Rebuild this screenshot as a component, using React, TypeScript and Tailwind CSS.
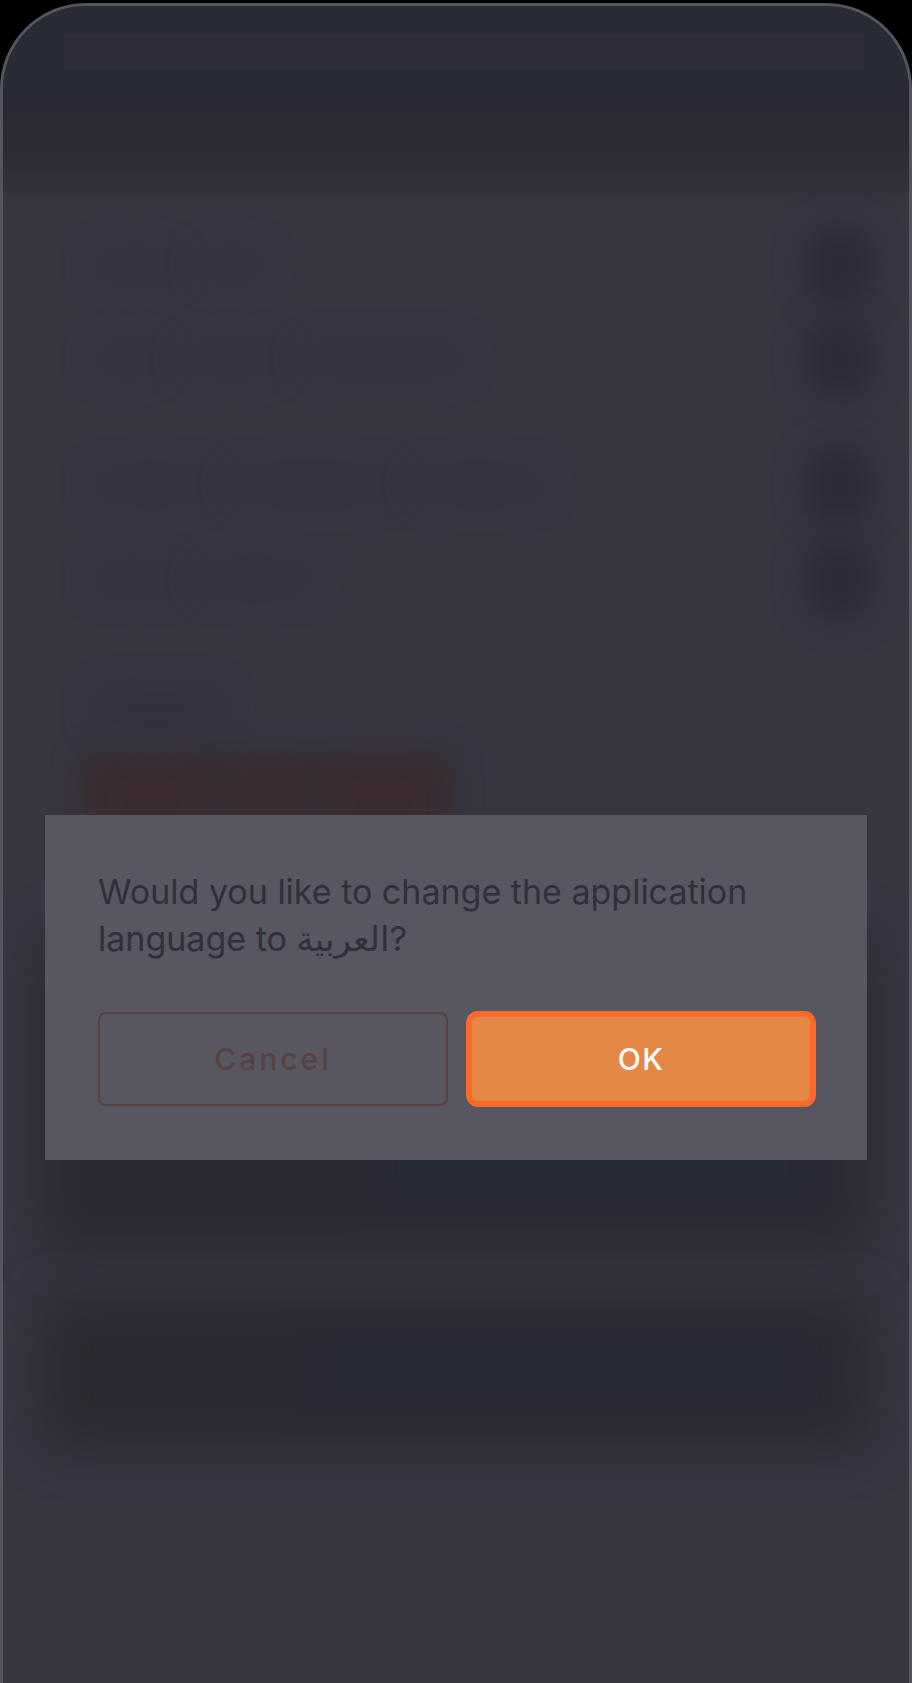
import { useState } from "react";

interface SettingRow {
  id: string;
  words: string[];
  rowClass: string;
}

// Shapes of the settings behind the dialog, far out of focus
const settingRows: SettingRow[] = [
  { id: "first", words: ["w-20", "w-16"], rowClass: "mt-[37px]" },
  { id: "second", words: ["w-16", "w-24", "w-40"], rowClass: "mt-[30px]" },
  { id: "third", words: ["w-28", "w-40", "w-32"], rowClass: "mt-[62px]" },
  { id: "fourth", words: ["w-20", "w-28"], rowClass: "mt-[30px]" },
];

const SettingsBackdrop = () => (
  <div
    aria-hidden="true"
    className="col-start-1 row-start-1 flex flex-col overflow-hidden">
    <div className="flex h-[158px] flex-col bg-linear-to-b from-[#282a36] from-50% via-[#2c2b33] via-85% to-[#2f2e38] pt-[27px] pr-[45px] pl-[61px]">
      <div className="h-9 bg-[#2f2d39]" />
    </div>
    <div className="h-12 bg-linear-to-b from-[#2f2e38] to-[#363540]" />

    <div className="-mt-4 flex flex-col">
      {settingRows.map(row => (
        <div
          key={row.id}
          className={`flex h-16 items-center justify-between pr-[38px] pl-[92px] ${row.rowClass}`}>
          <div className="flex gap-6">
            {row.words.map((width, i) => (
              <div
                key={i}
                className={`h-6 rounded-full bg-[#33323d] blur-lg ${width}`}
              />
            ))}
          </div>
          <div className="h-20 w-16 rounded-full bg-[#2c2b36] blur-lg" />
        </div>
      ))}
    </div>

    <div className="mt-[80px] ml-[92px] h-9 w-32 rounded-full bg-[#32313c] blur-lg" />
    <div className="mt-6 ml-[76px] flex h-28 w-[376px] items-center justify-between bg-[#382f34] px-6 blur-md">
      <div className="h-16 w-24 bg-[#3c2b30] blur-lg" />
      <div className="h-16 w-12 bg-[#3c2b30] blur-lg" />
      <div className="h-16 w-24 bg-[#3c2b30] blur-lg" />
    </div>

    <div className="mx-[42px] mt-[72px] flex h-[314px] items-end justify-end bg-[#2b2a32] pr-12 pb-10 blur-xl">
      <div className="h-20 w-7/12 bg-[#272a37]" />
    </div>
    <div className="mx-[42px] mt-[50px] flex h-[146px] items-center justify-end bg-[#2b2a32] pr-12 blur-xl">
      <div className="h-14 w-8/12 bg-[#272a37]" />
    </div>
  </div>
);

interface LanguageDialogProps {
  language: string;
  onClose: () => void;
}

const LanguageDialog = ({ language, onClose }: LanguageDialogProps) => (
  <div className="z-10 col-start-1 row-start-1 px-[42px] pt-[809px] pb-12">
    <div
      role="dialog"
      aria-modal="true"
      aria-labelledby="language-question"
      className="bg-[#575661] py-[53px] pr-[51px] pl-[53px]">
      <p
        id="language-question"
        className="text-[34px] leading-[47px] text-[#302f3c]">
        {`Would you like to change the application language to ${language}?`}
      </p>
      <div className="mt-[49px] grid grid-cols-2 items-center gap-[18px]">
        <button
          type="button"
          onClick={onClose}
          className="h-[94px] rounded-lg border-2 border-[#58413f] text-[30px] font-medium tracking-widest text-[#58413f]">
          Cancel
        </button>
        <button
          type="button"
          onClick={onClose}
          className="h-24 rounded-xl border-6 border-[#fb6a2b] bg-[#e68845] text-[30px] font-medium tracking-wider text-white">
          OK
        </button>
      </div>
    </div>
  </div>
);

export default function App() {
  const [open, setOpen] = useState(true);

  return (
    <main className="flex min-h-screen flex-col bg-black pt-[3px] font-['Inter','DejaVu_Sans',sans-serif]">
      <div className="grid flex-1 overflow-hidden rounded-t-[86px] border-3 border-b-0 border-[#56555f] bg-[#363540]">
        <SettingsBackdrop />
        {open && (
          <LanguageDialog language="العربية" onClose={() => setOpen(false)} />
        )}
      </div>
    </main>
  );
}
